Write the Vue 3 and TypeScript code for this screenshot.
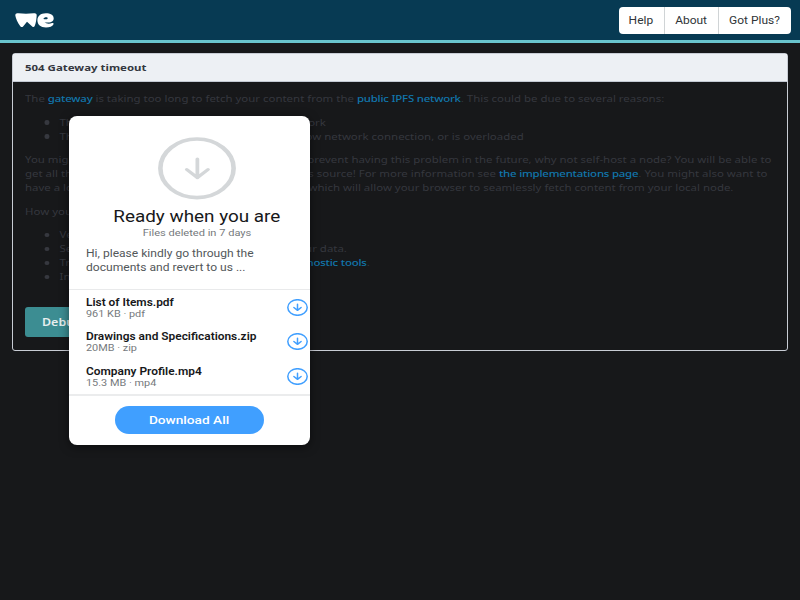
<script setup lang="ts">
interface Piece { text: string; link?: boolean }
interface Line { left: Piece[]; right?: Piece[]; end?: number }

const intro: Line[] = [
  {
    left: [
      { text: 'The ' }, { text: 'gateway', link: true },
      { text: ' is taking too long to fetch your content from the ' },
      { text: 'public IPFS network', link: true },
      { text: '. This could be due to several reasons:' },
    ],
  },
]
const reasons: Line[] = [
  { left: [{ text: 'Th' }], right: [{ text: 'ork' }], end: 246.7 },
  { left: [{ text: 'Th' }], right: [{ text: 'ow network connection, or is overloaded' }], end: 408.8 },
]
const advice: Line[] = [
  { left: [{ text: 'You mig' }], right: [{ text: 'prevent having this problem in the future, why not self-host a node? You will be able to' }], end: 611.9 },
  { left: [{ text: 'get all th' }], right: [{ text: 's source! For more information see ' }, { text: 'the implementations page', link: true }, { text: '. You might also want to' }], end: 608.6 },
  { left: [{ text: 'have a lo' }], right: [{ text: 'which will allow your browser to seamlessly fetch content from your local node.' }], end: 580.7 },
]
const question: Line[] = [{ left: [{ text: 'How you' }] }]
const steps: Line[] = [
  { left: [{ text: 'Ve' }] },
  { left: [{ text: 'Se' }], right: [{ text: 'ur data.' }], end: 263.9 },
  { left: [{ text: 'Tr' }], right: [{ text: 'nostic tools', link: true }, { text: '.' }], end: 282.6 },
  { left: [{ text: 'In' }] },
]
const groups: { list: boolean; lines: Line[] }[] = [
  { list: false, lines: intro },
  { list: true, lines: reasons },
  { list: false, lines: advice },
  { list: false, lines: question },
  { list: true, lines: steps },
]
const files = [
  { name: 'List of Items.pdf', meta: '961 KB · pdf' },
  { name: 'Drawings and Specifications.zip', meta: '20MB · zip' },
  { name: 'Company Profile.mp4', meta: '15.3 MB · mp4' },
]
const listIndent = 28.3
const lineWidth = (line: Line, list: boolean) =>
  line.end ? { width: `${line.end - (list ? listIndent : 0)}px` } : {}
</script>

<template>
  <div class="page">
    <header class="topbar">
      <svg class="logo" viewBox="0 0 39 15">
        <path d="M2 .3C5 0 8 .8 11 .8S17 0 20 .3Q22 .4 21.7 2.6C21.4 6.6 21 9.8 19.8 12.8Q18.8 14.8 17.2 13.4L12 8.8L8.3 13.2Q6.8 14.9 5.3 13.2C2.6 9.8 .9 6 .3 2.6Q0 .6 2 .3Z" />
        <path d="M30.8 .3C25.6 .3 22.4 3.1 22.4 7.3C22.4 11.8 25.6 14.5 31 14.5C34.6 14.5 37.4 13.4 38.4 11.5C38.9 10.4 38.3 9.8 37.1 10.1C33.9 11.1 31 10.6 29.6 9.3C33 9.9 38.7 9.4 38.7 5.4C38.7 2 35.3 .3 30.8 .3ZM31.2 4.2C33.3 4.2 33.2 6.3 31 6.3C29.9 6.3 29.1 6.2 28.4 5.9C28.7 4.8 29.9 4.2 31.2 4.2Z" fill-rule="evenodd" />
      </svg>
      <nav class="nav">
        <a class="help"><span>Help</span></a>
        <a class="about"><span>About</span></a>
        <a class="plus"><span>Got Plus?</span></a>
      </nav>
    </header>

    <main class="panel">
      <h1><span class="stretch">504 Gateway timeout</span></h1>
      <div class="copy">
        <component :is="g.list ? 'ul' : 'div'" v-for="(g, i) in groups" :key="i" class="group">
          <component :is="g.list ? 'li' : 'p'" v-for="(line, j) in g.lines" :key="j">
            <div class="line" :style="lineWidth(line, g.list)">
              <span><span v-for="(p, k) in line.left" :key="k" :class="{ link: p.link }">{{ p.text }}</span></span>
              <span v-if="line.right"><span v-for="(p, k) in line.right" :key="k" :class="{ link: p.link }">{{ p.text }}</span></span>
            </div>
          </component>
        </component>
      </div>
      <button class="debug"><span class="stretch">Debu</span></button>
    </main>

    <section class="card">
      <div class="summary">
        <svg class="big-icon" viewBox="0 0 62.4 63" preserveAspectRatio="none">
          <circle cx="31.2" cy="31.3" r="29.3" />
          <path d="M31.5 22V40.7M23 32.5L31.5 40.7L40 32.5" stroke-width="3" />
        </svg>
        <h2><span>Ready when you are</span></h2>
        <div class="expiry"><span>Files deleted in 7 days</span></div>
        <p class="message"><span class="stretch">Hi, please kindly go through the<br>documents and revert to us ...</span></p>
      </div>
      <ul class="files">
        <li v-for="f in files" :key="f.name">
          <div class="info">
            <div class="name"><span class="stretch">{{ f.name }}</span></div>
            <div class="meta"><span class="stretch">{{ f.meta }}</span></div>
          </div>
          <svg class="small-icon" viewBox="0 0 21 17">
            <ellipse cx="10.5" cy="8.5" rx="9.7" ry="7.8" />
            <path d="M10.5 5.2V11.3M6.9 8.5L10.5 11.3L14.1 8.5" />
          </svg>
        </li>
      </ul>
      <footer><button class="all"><span>Download All</span></button></footer>
    </section>
  </div>
</template>

<style>
body { margin: 0; background: #17181a; overflow: hidden; }
</style>

<style scoped>
* { box-sizing: border-box; }
.page { position: relative; width: 800px; height: 600px; overflow: hidden; background: #17181a; font-family: Roboto, sans-serif; }
.stretch { display: inline-block; transform: scaleX(1.185); transform-origin: left center; white-space: nowrap; }
.topbar { display: flex; align-items: center; justify-content: space-between; height: 43px; padding: 0 9.5px 0 15px; background: #073a53; border-bottom: 3px solid #69c4cd; }
.logo { width: 39px; height: 15px; fill: #fff; }
.nav { display: flex; width: 172px; height: 27px; margin-top: 1px; background: #fff; border-radius: 4px; }
.nav a { display: flex; align-items: center; justify-content: center; font-size: 10.6px; color: #2f3437; padding-bottom: 1px; }
.nav a + a { border-left: 1px solid #d0d4d6; }
.nav span { transform: scaleX(1.13); white-space: nowrap; }
.help { width: 45.4px; }
.about { width: 54px; }
.plus { width: 72.6px; }

.panel { margin: 10px 12px 0; height: 298px; border: 1px solid #c8ccd4; border-radius: 3px; font-family: "Noto Sans", sans-serif; }
h1 { display: flex; align-items: center; margin: 0; height: 28px; padding: 0 12px; background: #edf0f4; border-bottom: 1px solid #c3c9d3; font-size: 9.5px; font-weight: 700; color: #34373f; }
h1 .stretch { transform: scaleX(1.205); }
.copy { width: 620px; margin: 10px 0 0 12px; transform: scaleX(1.22); transform-origin: left center; font-size: 9.4px; line-height: 14px; color: #35373e; white-space: nowrap; }
.group { margin: 0 0 9.5px; padding: 0; list-style: none; }
.group p { margin: 0; }
.group li { display: flex; align-items: center; padding-left: 16.2px; }
.group li::before { content: ""; width: 3.6px; height: 4.2px; margin-right: 8.5px; border-radius: 50%; background: #36383f; }
.line { display: flex; justify-content: space-between; }
.line > span { white-space: pre; }
.link { color: #1176ac; font-weight: 500; letter-spacing: -.18px; }
.debug { display: flex; align-items: center; width: 92px; height: 30px; margin: 22.6px 0 0 12px; padding: 0 17px; border: 0; border-radius: 3px; background: #3c8d92; color: #e6eeee; font: 600 10.5px "Noto Sans", sans-serif; }

.card { position: absolute; left: 69px; top: 116px; width: 241px; height: 328.5px; background: #fff; border-radius: 8px; box-shadow: 0 2px 10px rgba(0, 0, 0, .5); }
.summary { height: 174px; padding: 20.5px 0 0; border-bottom: 1px solid #e9eaeb; }
.big-icon { display: block; width: 78px; height: 63px; margin: 0 auto 0 89px; fill: none; stroke: #d4d7d9; stroke-width: 3.7; stroke-linecap: round; stroke-linejoin: round; }
h2 { margin: 7px 0 0 14px; height: 19px; font-size: 16px; line-height: 20px; font-weight: 400; color: #17181a; text-align: center; }
h2 span, .expiry span, .all span { display: inline-block; transform: scaleX(1.18); white-space: nowrap; }
.expiry { margin-left: 15px; height: 14px; line-height: 14px; font-size: 9.4px; color: #75797c; text-align: center; }
.message { margin: 7px 0 0 17px; font-size: 10.2px; line-height: 14px; color: #53575a; }
.files { height: 106px; margin: 0; padding: 5px 3px 0 17px; list-style: none; border-bottom: 2px solid #ebeced; }
.files li { display: flex; justify-content: space-between; height: 34.6px; }
.info { padding-top: .6px; }
.name { height: 13.2px; line-height: 13px; font-size: 10px; font-weight: 600; color: #17181a; }
.name .stretch { transform: scaleX(1.19); }
.meta { height: 11px; line-height: 11px; font-size: 9px; color: #75797c; }
.meta .stretch { transform: scaleX(1.21); }
.small-icon { width: 21px; height: 17px; margin-top: 3.5px; margin-right: -.5px; fill: none; stroke: #409fff; stroke-width: 1.5; stroke-linecap: round; stroke-linejoin: round; }
footer { padding: 9.5px 0 0 46px; }
.all { display: block; width: 148.5px; height: 28px; padding: 0; border: 0; border-radius: 14px; background: #409fff; color: #fff; font: 500 11.6px Roboto, sans-serif; text-align: center; }
</style>
